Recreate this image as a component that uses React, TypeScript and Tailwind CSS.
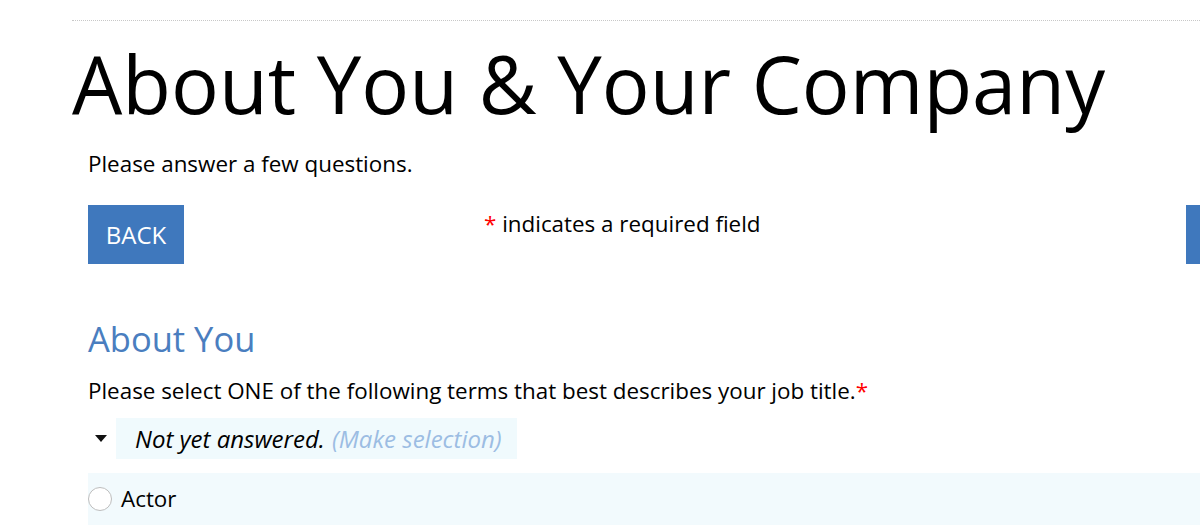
export default function App() {
  return (
    <div className="min-h-[529px] bg-white font-['Open_Sans',sans-serif] text-black overflow-hidden">
      <div className="pl-[72px] pt-[20px]">
        <div className="border-t border-dotted border-[#c8c8c8]" />
        <h1 className="mt-[12px] text-[79.6px] leading-[100px] font-normal whitespace-nowrap">
          About You &amp; Your Company
        </h1>
      </div>

      <div className="pl-[88px]">
        <p className="mt-[17px] text-[22.4px] leading-[28px]">Please answer a few questions.</p>

        <div className="mt-[27px] flex items-start">
          <button className="w-[96px] h-[59px] bg-[#3f78bd] text-white text-[24px]">BACK</button>
          <p className="ml-[300px] mt-[5px] text-[22.4px] leading-[28px]">
            <span className="text-[#ff0000]">*</span> indicates a required field
          </p>
          <div className="ml-auto w-[14px] h-[59px] bg-[#3f78bd]" />
        </div>

        <h2 className="mt-[53px] text-[34.5px] leading-[44px] text-[#4a7ebf]">About You</h2>

        <p className="mt-[16px] text-[22.4px] leading-[28px]">
          Please select ONE of the following terms that best describes your job title.
          <span className="text-[#ff0000]">*</span>
        </p>

        <div className="mt-[13px] flex items-center">
          <svg width="12" height="8" viewBox="0 0 12 8" className="ml-[7px] mr-[9px]">
            <path d="M0 0 L12 0 L6 7 Z" fill="#111" />
          </svg>
          <div className="h-[41px] w-[401px] bg-[#f0fafd] flex items-center pl-[19px] text-[24px] italic">
            <span>Not yet answered.</span>
            <span className="ml-[7px] text-[#9cbde3]">(Make selection)</span>
          </div>
        </div>

        <div className="mt-[14px] h-[52px] bg-[#f2fafd] flex items-center">
          <span className="w-[24px] h-[24px] rounded-full border border-[#bdbdbd] bg-white" />
          <span className="ml-[9px] text-[22.4px]">Actor</span>
        </div>
      </div>
    </div>
  );
}
